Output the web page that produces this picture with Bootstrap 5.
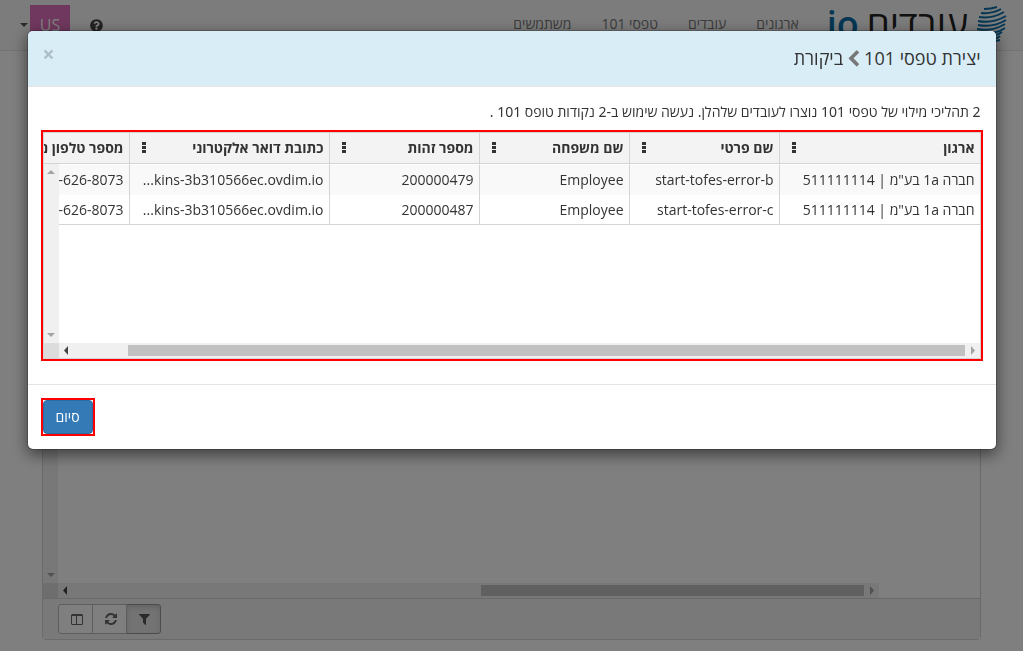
<!DOCTYPE html>
<html lang="he" dir="rtl">
<head>
<meta charset="utf-8">
<meta name="viewport" content="width=device-width, initial-scale=1">
<title>יצירת טפסי 101</title>
<link href="https://cdn.jsdelivr.net/npm/bootstrap@5.3.0/dist/css/bootstrap.min.css" rel="stylesheet">
<style>
body { font: 14px/20px "Open Sans", "Noto Sans", sans-serif; color: #333; background: #fff; }
svg { display: block; fill: currentColor; }

/* top bar */
.topbar { height: 51px; background: #f8f8f8; border-bottom: 1px solid #e7e7e7; padding: 0 16px 0 20px; }
.topbar a { color: #777; text-decoration: none; }
.topbar .brand-link { color: #222; padding-top: 5px; }
.brand-name { font-size: 37px; line-height: 38px; font-weight: 500; }
.brand-io { font-size: 36px; line-height: 38px; font-weight: 600; color: #0a6ea8; }
.main-links { gap: 30px; padding-top: 14px; }
.avatar { width: 40px; height: 40px; background: #e070bc; color: #fff; font-size: 16px; line-height: 40px; }
.user-area { gap: 20px; padding-top: 5px; }
.user-btn { color: #555; gap: 2px; }
.caret-down { border: 4px solid transparent; border-top-color: currentColor; border-bottom: 0; }

/* data grids */
.grid-box { border: 1px solid #d4d4d4; }
.page-wrap { max-width: 939px; }
.page-grid { border-radius: 4px; }
.page-grid-body { height: 518px; }
.page-grid-body .vbar { padding-bottom: 6px; }
.grid-foot { background: #f3f3f3; border-top: 1px solid #d4d4d4; padding: 5px 15px; }
.tool-group .btn { width: 35px; height: 30px; padding: 0 0 0 2px; border: 1px solid #bbb; border-radius: 0; color: #666; background: #fff; margin-left: -1px; }
.tool-group .btn:first-child { border-radius: 0 3px 3px 0; }
.tool-group .btn:last-child { border-radius: 3px 0 0 3px; margin-left: 0; }
.tool-group .btn.active { background: #e6e6e6; border-color: #999; color: #555; box-shadow: inset 0 3px 5px rgba(0,0,0,.125); }

.vbar { width: 15px; background: #f0f0f0; color: #a3a3a3; }
.hbar { height: 15px; background: #f0f0f0; }
.bar-corner { width: 15px; background: #dcdcdc; }
.bar-thumb { background: #c1c1c1; height: 11px; }
.bar-end { width: 15px; }

/* dialog */
.modal-dialog { max-width: 970px; margin: 30px auto; }
.modal-content { border: 1px solid rgba(0,0,0,.2); border-radius: 6px; box-shadow: 0 5px 15px rgba(0,0,0,.5); color: #333; }
.modal-header { background: #d9edf7; border-bottom: 1px solid #e5e5e5; padding: 15px; height: 56px; border-radius: 5px 5px 0 0; }
.modal-title { font-size: 18px; line-height: 25px; font-weight: 400; font-kerning: none; }
.modal-title svg { color: #777; }
.x-btn { color: #000; opacity: .2; font-size: 21px; line-height: 16px; font-weight: 700; }
.modal-body { padding: 15px 15px 25px; }
.modal-body p { margin-bottom: 10px; font-family: "Noto Sans", "Open Sans", sans-serif; }
.modal-footer { border-top: 1px solid #e5e5e5; padding: 15px; }
.marked { outline: 2px solid #f00; }
.done-btn { background: #337ab7; border: 1px solid #2e6da4; color: #fff; font-size: 14px; line-height: 20px; padding: 6px 12px; border-radius: 4px; }
.result-scroll { height: 210px; }

.result-table { table-layout: fixed; width: 1050px; border-collapse: separate; border-spacing: 0; }
.result-table th, .result-table td { padding: 5px; border-left: 1px solid #d4d4d4; white-space: nowrap; overflow: hidden; line-height: 20px; }
.result-table th { height: 31px; background: #f3f3f3; border-bottom: 1px solid #d4d4d4; }
.result-table tbody tr:first-child td { background: #f9f9f9; background-clip: padding-box; border-top: 1px solid #fff; }
.result-table tbody tr:last-child td { border-bottom: 1px solid #d4d4d4; padding-bottom: 4px; }
.c-wide { width: 201px; } .c-mail { width: 200px; } .c-std { width: 150px; }
.col-menu { color: #333; width: 18px; }
.side-track { top: 31px; bottom: 0; left: 0; padding: 6px 0; }
</style>
</head>
<body class="modal-open overflow-hidden">

<nav class="topbar d-flex align-items-start" aria-label="ראשי">
  <a class="brand-link d-flex align-items-start" href="#" aria-label="עובדים io">
    <svg class="ms-2" width="31" height="37" viewBox="0 0 31 37"><path fill="none" stroke="#0a6ea8" stroke-width="2" d="M8 4q7 0 13-2M5 8q11 1 20-4M3 12q13 2 25-5M2 16q14 3 28-5M2 20q15 3 28-5M1 24q15 3 28-5M3 27q14 4 26-4M9 31q10 1 17-4M16 33q5 1 8-2M16 36q5 0 8-1"/></svg>
    <span class="brand-name">עובדים</span>
    <span class="brand-io me-2">io</span>
  </a>
  <div class="main-links d-flex me-4 pe-1">
    <a href="#">ארגונים</a>
    <a href="#">עובדים</a>
    <a href="#">טפסי 101</a>
    <a href="#">משתמשים</a>
  </div>
  <div class="user-area d-flex align-items-center me-auto">
    <a href="#" aria-label="עזרה"><svg width="13" height="13" viewBox="0 0 512 512"><path fill="#444" d="M504 256c0 136.997-111.043 248-248 248S8 392.997 8 256C8 119.083 119.043 8 256 8s248 111.083 248 248zM262.655 90c-54.497 0-89.255 22.957-116.549 63.758-3.536 5.286-2.353 12.415 2.715 16.258l34.699 26.310c5.205 3.947 12.621 3.008 16.665-2.122 17.864-22.658 30.113-35.797 57.303-35.797 20.429 0 45.698 13.148 45.698 32.958 0 14.976-12.363 22.667-32.534 33.976C247.128 238.528 216 254.941 216 296v4c0 6.627 5.373 12 12 12h56c6.627 0 12-5.373 12-12v-1.333c0-28.462 83.186-29.647 83.186-106.667 0-58.002-60.165-102-116.531-102zM256 338c-25.365 0-46 20.635-46 46 0 25.364 20.635 46 46 46s46-20.636 46-46c0-25.365-20.635-46-46-46z"/></svg></a>
    <button type="button" class="user-btn btn p-0 border-0 rounded-0 d-flex align-items-center">
      <span class="avatar">US</span><span class="caret-down"></span>
    </button>
  </div>
</nav>

<main class="page-wrap mx-auto mt-4 pt-1">
  <div class="page-grid grid-box">
    <div class="page-grid-body d-flex flex-column" dir="ltr">
      <div class="vbar flex-grow-1 d-flex flex-column justify-content-end align-items-center">
        <span class="caret-down"></span>
      </div>
      <div class="hbar d-flex align-items-center" style="width:89.2%">
        <span class="bar-corner h-100"></span>
        <svg class="bar-end" height="9" viewBox="0 0 15 9"><path fill="#444" d="M9 0v9L5 4.500z"/></svg>
        <span class="flex-grow-1"></span>
        <span class="bar-thumb" style="width:45.8%"></span>
        <svg class="bar-end" height="9" viewBox="0 0 15 9"><path fill="#a3a3a3" d="M6 0v9l4-4.500z"/></svg>
      </div>
    </div>
    <div class="grid-foot d-flex justify-content-end">
      <div class="tool-group d-flex" role="group">
        <button type="button" class="btn active d-flex align-items-center justify-content-center" aria-label="סינון"><svg width="11" height="14" viewBox="0 0 1408 1792"><path d="M1403 295q17 41-14 70l-493 493v742q0 42-39 59-13 5-25 5-27 0-45-19l-256-256q-19-19-19-45V858L19 365q-31-29-14-70 17-39 59-39h1280q42 0 59 39z"/></svg></button>
        <button type="button" class="btn d-flex align-items-center justify-content-center" aria-label="רענון"><svg width="12" height="14" viewBox="0 0 1536 1792"><path d="M1511 1056q0 5-1 7-64 268-268 434.500T764 1664q-146 0-282.500-55T238 1452l-129 129q-19 19-45 19t-45-19-19-45v-448q0-26 19-45t45-19h448q26 0 45 19t19 45-19 45l-137 137q71 66 161 102t187 36q134 0 250-65t186-179q11-17 53-117 8-23 30-23h192q13 0 22.500 9.500t9.500 22.500zm25-800v448q0 26-19 45t-45 19h-448q-26 0-45-19t-19-45 19-45l138-138Q969 384 768 384q-134 0-250 65T332 628q-11 17-53 117-8 23-30 23H50q-13 0-22.500-9.500T18 736v-7q65-268 270-434.500T768 128q146 0 284 55.500T1297 340l130-129q19-19 45-19t45 19 19 45z"/></svg></button>
        <button type="button" class="btn d-flex align-items-center justify-content-center" aria-label="עמודות"><svg width="12" height="11" viewBox="0 0 12 11"><path fill-rule="evenodd" d="M1 0h10l1 1v9l-1 1H1l-1-1V1zM1 2v8h4V2zM6 2v8h5V2z"/></svg></button>
      </div>
    </div>
  </div>
</main>

<div class="modal-backdrop show"></div>

<div class="modal d-block overflow-hidden" tabindex="-1" role="dialog" aria-labelledby="dlgTitle">
  <div class="modal-dialog">
    <div class="modal-content">
      <div class="modal-header d-flex align-items-start justify-content-between">
        <h4 class="modal-title d-flex align-items-center" id="dlgTitle">
          <span>יצירת טפסי 101</span>
          <svg class="mx-1" width="13" height="18" viewBox="0 0 1280 1792"><path d="M1171 301L640 832l531 531q19 19 19 45t-19 45l-166 166q-19 19-45 19t-45-19L173 877q-19-19-19-45t19-45L915 45q19-19 45-19t45 19l166 166q19 19 19 45t-19 45z"/></svg>
          <span>ביקורת</span>
        </h4>
        <button type="button" class="x-btn btn p-0 border-0" aria-label="סגירה">×</button>
      </div>

      <div class="modal-body">
        <p>2 תהליכי מילוי של טפסי 101 נוצרו לעובדים שלהלן. נעשה שימוש ב-2 נקודות טופס 101 .</p>
        <div class="grid-box marked">
          <div class="result-scroll position-relative overflow-hidden">
            <table class="result-table">
              <colgroup><col class="c-wide"><col class="c-std"><col class="c-std"><col class="c-std"><col class="c-mail"><col class="c-wide"></colgroup>
              <thead>
                <tr>
                  <th scope="col"><div class="d-flex justify-content-between align-items-center">ארגון<svg class="col-menu" height="12" viewBox="0 0 18 12"><path d="M7 0h4v3H7zM7 4h4v3H7zM7 8h4v3H7z"/></svg></div></th>
                  <th scope="col"><div class="d-flex justify-content-between align-items-center">שם פרטי<svg class="col-menu" height="12" viewBox="0 0 18 12"><path d="M7 0h4v3H7zM7 4h4v3H7zM7 8h4v3H7z"/></svg></div></th>
                  <th scope="col"><div class="d-flex justify-content-between align-items-center">שם משפחה<svg class="col-menu" height="12" viewBox="0 0 18 12"><path d="M7 0h4v3H7zM7 4h4v3H7zM7 8h4v3H7z"/></svg></div></th>
                  <th scope="col"><div class="d-flex justify-content-between align-items-center">מספר זהות<svg class="col-menu" height="12" viewBox="0 0 18 12"><path d="M7 0h4v3H7zM7 4h4v3H7zM7 8h4v3H7z"/></svg></div></th>
                  <th scope="col"><div class="d-flex justify-content-between align-items-center">כתובת דואר אלקטרוני<svg class="col-menu" height="12" viewBox="0 0 18 12"><path d="M7 0h4v3H7zM7 4h4v3H7zM7 8h4v3H7z"/></svg></div></th>
                  <th scope="col">מספר טלפון נייד</th>
                </tr>
              </thead>
              <tbody>
                <tr><td>חברה 1a בע"מ | 511111114</td><td>start-tofes-error-b</td><td>Employee</td><td>200000479</td><td><bdi dir="ltr">...kins-3b310566ec.ovdim.io</bdi></td><td><bdi dir="ltr">-626-8073</bdi></td></tr>
                <tr><td>חברה 1a בע"מ | 511111114</td><td>start-tofes-error-c</td><td>Employee</td><td>200000487</td><td><bdi dir="ltr">...kins-3b310566ec.ovdim.io</bdi></td><td><bdi dir="ltr">-626-8073</bdi></td></tr>
              </tbody>
            </table>
            <div class="vbar side-track position-absolute d-flex flex-column justify-content-between align-items-center">
              <svg width="8" height="4" viewBox="0 0 8 4"><path d="M0 4h8L4 0z"/></svg>
              <svg width="8" height="4" viewBox="0 0 8 4"><path d="M0 0h8L4 4z"/></svg>
            </div>
          </div>
          <div class="hbar d-flex align-items-center" dir="ltr">
            <span class="bar-corner h-100"></span>
            <svg class="bar-end" height="9" viewBox="0 0 15 9"><path fill="#444" d="M9 0v9L5 4.500z"/></svg>
            <span class="flex-grow-1"></span>
            <span class="bar-thumb" style="width:89.4%"></span>
            <svg class="bar-end" height="9" viewBox="0 0 15 9"><path fill="#a3a3a3" d="M6 0v9l4-4.500z"/></svg>
          </div>
        </div>
      </div>

      <div class="modal-footer d-flex justify-content-end">
        <div class="marked m-0"><button type="button" class="done-btn btn d-block">סיום</button></div>
      </div>
    </div>
  </div>
</div>

<script src="https://cdn.jsdelivr.net/npm/bootstrap@5.3.0/dist/js/bootstrap.bundle.min.js"></script>
</body>
</html>
